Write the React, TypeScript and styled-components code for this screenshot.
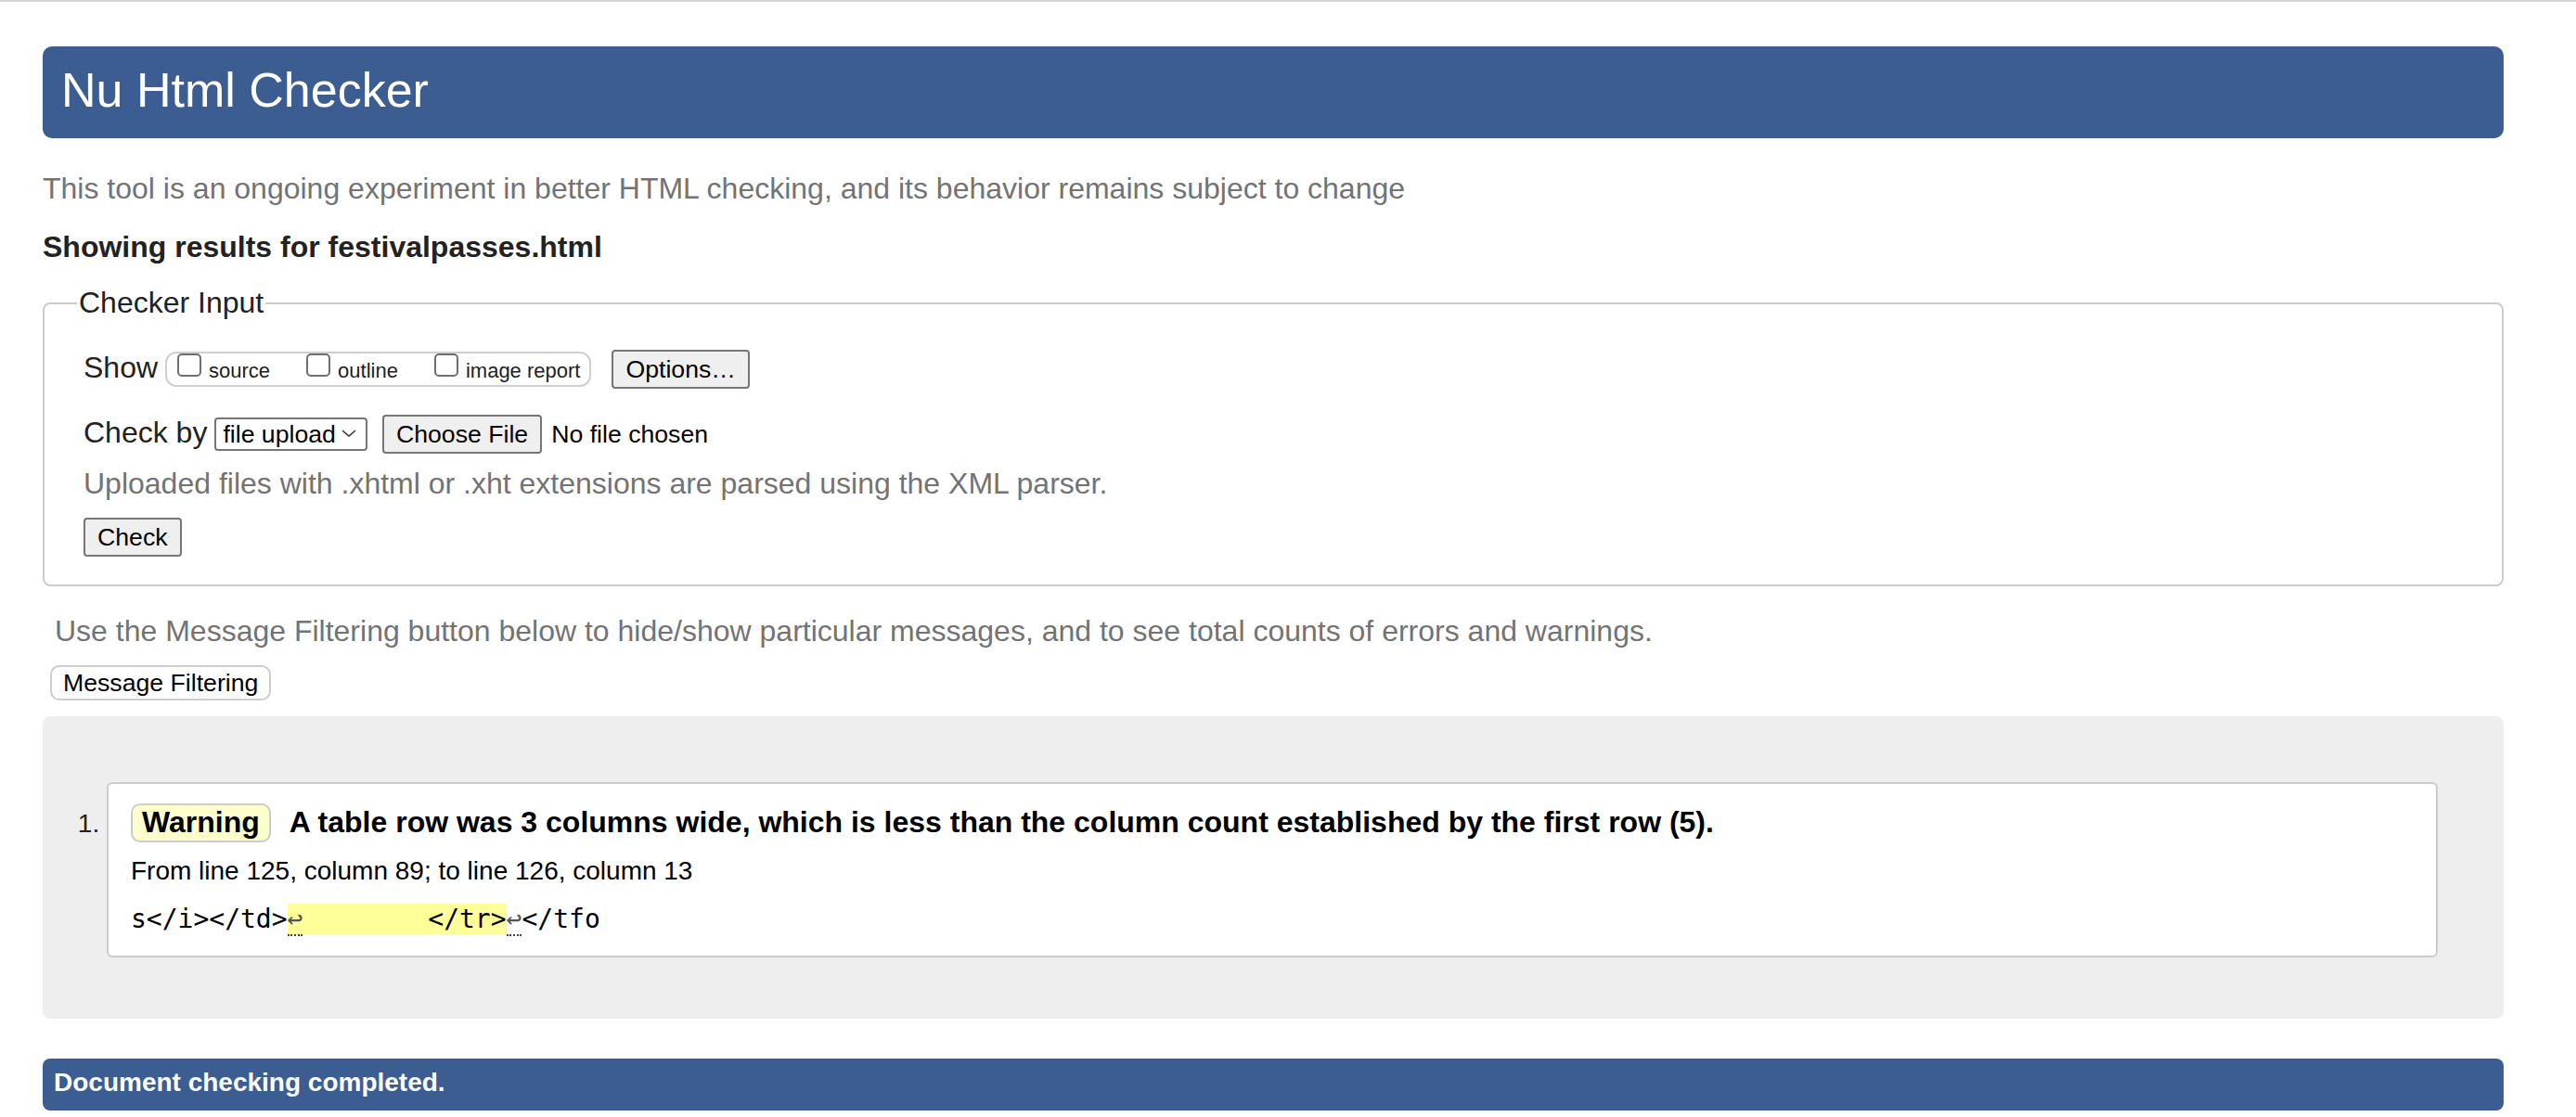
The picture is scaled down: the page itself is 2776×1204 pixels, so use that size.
import React from 'react';
import styled, { createGlobalStyle } from 'styled-components';

const GlobalStyle = createGlobalStyle`
  html, body {
    margin: 0;
    padding: 0;
    background: #fff;
  }
  body {
    font-family: "Liberation Sans", Arial, Helvetica, sans-serif;
    color: #222;
  }
`;

const Page = styled.div`
  border-top: 2px solid #d4d4d4;
  padding: 48px 78px 0 46px;
`;

const TitleBar = styled.h1`
  margin: 0;
  height: 99px;
  box-sizing: border-box;
  padding: 0 20px 5px;
  line-height: 94px;
  font-size: 52px;
  font-weight: normal;
  color: #fff;
  background: #3c5d91;
  border-radius: 10px;
`;

const Intro = styled.p<{ $top: number; $left?: number }>`
  margin: ${(p) => p.$top}px 0 0 ${(p) => p.$left || 0}px;
  font-size: 32px;
  line-height: 37px;
  color: #737373;
`;

const Heading = styled.h2`
  margin: 26px 0 0;
  font-size: 32px;
  line-height: 37px;
  font-weight: bold;
  color: #222;
`;

const Fieldset = styled.fieldset`
  margin: 23px 0 0;
  padding: 32px 0 30px 42px;
  border: 2px solid #cccccc;
  border-radius: 8px;
  min-width: 0;
`;

const Legend = styled.legend`
  margin-left: -7px;
  padding: 0 2px;
  font-size: 32px;
  line-height: 37px;
  color: #222;
`;

const Row = styled.div<{ $top?: number }>`
  display: flex;
  align-items: center;
  height: 42px;
  margin-top: ${(p) => p.$top || 0}px;
`;

const FieldLabel = styled.span`
  font-size: 32px;
  line-height: 37px;
  margin: 0 8px 4px 0;
  color: #222;
`;

const ShowGroup = styled.div`
  display: flex;
  align-items: center;
  gap: 39px;
  height: 38px;
  box-sizing: border-box;
  padding: 0 10px 3px 11px;
  margin-right: 22px;
  border: 2px solid #cfcfcf;
  border-radius: 12px;
`;

const Option = styled.label`
  display: flex;
  align-items: flex-end;
  font-size: 22px;
  line-height: 25px;
  color: #222;
`;

const Tick = styled.input.attrs({ type: 'checkbox' })`
  appearance: none;
  margin: 0 8px 6px 0;
  width: 26px;
  height: 25px;
  box-sizing: border-box;
  border: 2px solid #6e6e6e;
  border-radius: 5px;
  background: #fff;
`;

const Button = styled.button`
  height: 42px;
  box-sizing: border-box;
  margin: 0;
  padding: 0 13px;
  border: 2px solid #767676;
  border-radius: 4px;
  background: #efefef;
  font-family: inherit;
  font-size: 26.67px;
  line-height: 1;
  color: #000;
`;

const SelectBox = styled.div`
  display: flex;
  align-items: center;
  gap: 6px;
  height: 36px;
  box-sizing: border-box;
  padding: 0 10px 0 7px;
  margin-right: 16px;
  border: 2px solid #767676;
  border-radius: 4px;
  background: #fff;
  font-size: 26.67px;
  color: #000;

  svg {
    margin-bottom: 3px;
  }
`;

const FileName = styled.span`
  margin-left: 10px;
  font-size: 26.67px;
  color: #000;
`;

const FilterButton = styled.button`
  display: block;
  height: 38px;
  box-sizing: border-box;
  margin: 18px 0 0 8px;
  padding: 0 12px;
  border: 2px solid #cccccc;
  border-radius: 10px;
  background: #fff;
  font-family: inherit;
  font-size: 26.67px;
  line-height: 1;
  color: #000;
`;

const Results = styled.div`
  margin-top: 17px;
  padding: 71px 71px 66px 69px;
  background: #eeeeee;
  border-radius: 8px;
`;

const MessageList = styled.ol`
  margin: 0;
  padding: 0;
`;

const Message = styled.li`
  padding: 21px 24px 23px;
  border: 2px solid #cccccc;
  border-radius: 6px;
  background: #fff;
  font-size: 28px;
  color: #000;

  &::marker {
    color: #222;
  }
`;

const MessageHead = styled.div`
  display: flex;
  align-items: baseline;
  gap: 20px;
`;

const Badge = styled.strong`
  height: 42px;
  box-sizing: border-box;
  padding: 0 10px 2px;
  border: 2px solid #cccccc;
  border-radius: 10px;
  background: #ffffcc;
  font-size: 32px;
  line-height: 36px;
  color: #000;
`;

const MessageText = styled.span`
  font-size: 32px;
  line-height: 37px;
  font-weight: bold;
  color: #000;
`;

const Location = styled.p`
  margin: 15px 0 0;
  font-size: 28px;
  color: #000;
`;

const Extract = styled.code`
  display: block;
  margin-top: 19px;
  font-family: "DejaVu Sans Mono", "Liberation Mono", monospace;
  font-size: 28px;
  white-space: pre;
  color: #000;
`;

const Mark = styled.b`
  font-weight: normal;
  background: #ffff99;
`;

const LineBreak = styled.span`
  color: #555;
  border-bottom: 2px dotted #444;
`;

const Finished = styled.p`
  margin: 43px 0 0;
  height: 56px;
  box-sizing: border-box;
  padding: 0 12px 4px;
  line-height: 52px;
  font-size: 28px;
  font-weight: bold;
  color: #fff;
  background: #3c5d91;
  border-radius: 8px;
`;

const Chevron = () => (
  <svg width="16" height="8" viewBox="0 0 16 8">
    <polyline points="1,1 8,7 15,1" fill="none" stroke="#333" strokeWidth="1.6" />
  </svg>
);

const showOptions = ['source', 'outline', 'image report'];

export default function App() {
  return (
    <>
      <GlobalStyle />
      <Page>
        <TitleBar>Nu Html Checker</TitleBar>
        <Intro $top={36}>
          This tool is an ongoing experiment in better HTML checking, and its behavior remains subject to change
        </Intro>
        <Heading>Showing results for festivalpasses.html</Heading>

        <Fieldset>
          <Legend>Checker Input</Legend>
          <Row>
            <FieldLabel>Show</FieldLabel>
            <ShowGroup>
              {showOptions.map((opt) => (
                <Option key={opt}>
                  <Tick />
                  {opt}
                </Option>
              ))}
            </ShowGroup>
            <Button>Options…</Button>
          </Row>
          <Row $top={28}>
            <FieldLabel>Check by</FieldLabel>
            <SelectBox>
              <span>file upload</span>
              <Chevron />
            </SelectBox>
            <Button>Choose File</Button>
            <FileName>No file chosen</FileName>
          </Row>
          <Intro $top={14}>Uploaded files with .xhtml or .xht extensions are parsed using the XML parser.</Intro>
          <Row $top={18}>
            <Button>Check</Button>
          </Row>
        </Fieldset>

        <Intro $top={30} $left={13}>
          Use the Message Filtering button below to hide/show particular messages, and to see total counts of errors and warnings.
        </Intro>
        <FilterButton>Message Filtering</FilterButton>

        <Results>
          <MessageList>
            <Message>
              <MessageHead>
                <Badge>Warning</Badge>
                <MessageText>
                  A table row was 3 columns wide, which is less than the column count established by the first row (5).
                </MessageText>
              </MessageHead>
              <Location>From line 125, column 89; to line 126, column 13</Location>
              <Extract>
                {'s</i></td>'}
                <Mark>
                  <LineBreak>↩</LineBreak>
                  {'        </tr>'}
                </Mark>
                <LineBreak>↩</LineBreak>
                {'</tfo'}
              </Extract>
            </Message>
          </MessageList>
        </Results>

        <Finished>Document checking completed.</Finished>
      </Page>
    </>
  );
}
